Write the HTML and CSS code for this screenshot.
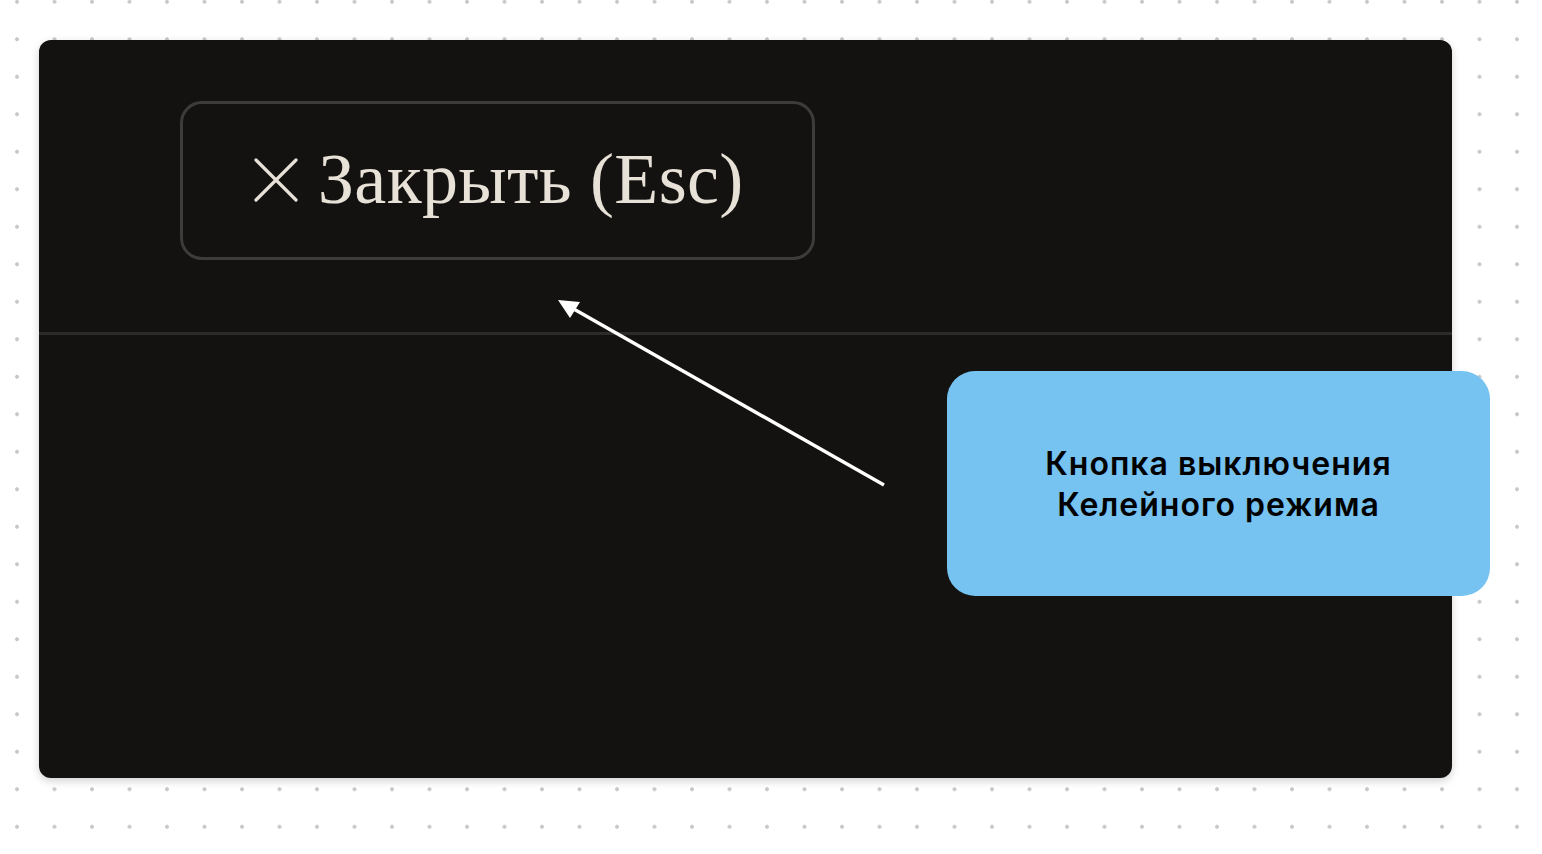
FILE: index.html
```html
<!DOCTYPE html>
<html lang="ru">
<head>
    <meta charset="UTF-8">
    <meta name="viewport" content="width=device-width, initial-scale=1.0">
    <title>Келейный режим</title>
    <link rel="stylesheet" href="styles.css">
</head>
<body>
    <div class="board">
        <div class="panel">
            <div class="panel-head">
                <button class="close-btn" type="button">
                    <svg class="close-icon" viewBox="0 0 46 46" width="46" height="46">
                        <path d="M3 3 L43 43 M43 3 L3 43" stroke="currentColor" stroke-width="3.2" stroke-linecap="round" fill="none"/>
                    </svg>
                    <span>Закрыть (Esc)</span>
                </button>
            </div>
        </div>

        <!-- аннотация поверх макета -->
        <svg class="pointer" width="1542" height="854" viewBox="0 0 1542 854">
            <line x1="884" y1="485" x2="572" y2="308" stroke="#fff" stroke-width="3.4"/>
            <polygon points="558,300 580,302 570,318" fill="#fff"/>
        </svg>
        <div class="note">Кнопка выключения<br>Келейного режима</div>
    </div>
</body>
</html>
```

FILE: styles.css
```css
body { margin: 0; background-color: #fff; background-image: radial-gradient(circle, #c8c8c8 1.6px, transparent 2.2px); background-size: 37.5px 37.5px; background-position: -1.75px -17px; font-family: 'Inter', 'Noto Sans', sans-serif; }
.board { position: relative; width: 1542px; height: 854px; overflow: hidden; padding: 40px 0 0 39px; box-sizing: border-box; }
.panel { width: 1413px; height: 738px; background: #131210; border-radius: 12px; box-shadow: 0 3px 8px rgba(0, 0, 0, 0.18); overflow: hidden; }
.panel-head { padding: 61px 0 72px 141px; border-bottom: 3px solid #2c2b29; }
.close-btn { display: inline-flex; align-items: center; gap: 19px; box-sizing: border-box; width: 635px; height: 159px; padding: 0 0 2px 70px; background: transparent; border: 3px solid #3d3c3a; border-radius: 22px; color: #e7e1d7; font-family: 'Liberation Serif', 'Times New Roman', serif; font-size: 72px; letter-spacing: 0.3px; cursor: pointer; }
.close-icon { flex: none; display: block; }
.pointer { position: absolute; left: 0; top: 0; pointer-events: none; }
.note { position: absolute; left: 947px; top: 371px; width: 543px; height: 225px; display: flex; align-items: center; justify-content: center; text-align: center; background: #76c2f0; border-radius: 28px; color: #000; font-size: 32px; font-weight: 600; letter-spacing: 1px; line-height: 41px; }
```
